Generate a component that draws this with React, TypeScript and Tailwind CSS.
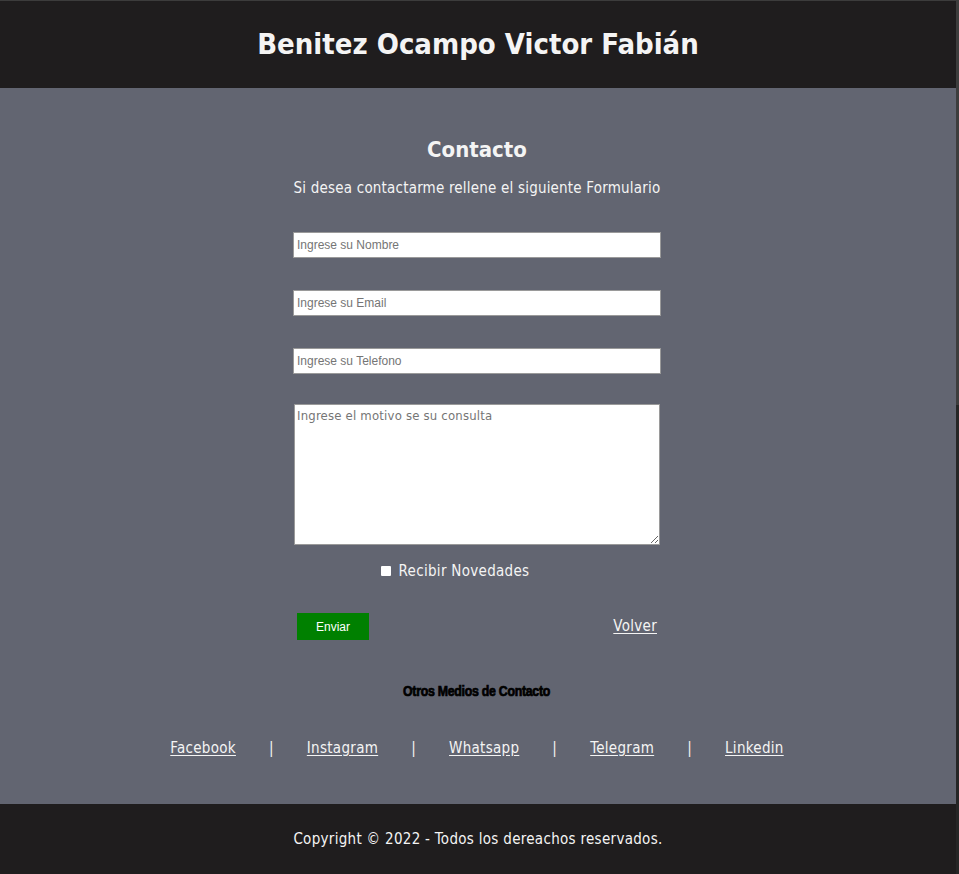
export default function App() {
  const links = ["Facebook", "Instagram", "Whatsapp", "Telegram", "Linkedin"];
  const ff = "font-['DejaVu_Sans_Condensed','DejaVu_Sans',sans-serif]";
  return (
    <div className="flex min-h-[874px] w-full">
      <div className={`flex flex-1 flex-col ${ff} text-[#f4f4f4]`}>
        <header className="flex h-[88px] items-center justify-center border-t border-[#3c3c3c] bg-[#1f1d1e]">
          <h1 className="text-[29px] font-bold">Benitez Ocampo Victor Fabián</h1>
        </header>

        <main className="flex flex-1 flex-col items-center bg-[#626571] pt-[46px] pr-[2px]">
          <h2 className="text-[22px] leading-8 font-bold">Contacto</h2>
          <p className="mt-[10px] text-[15px] leading-6 tracking-[0.2px]">Si desea contactarme rellene el siguiente Formulario</p>

          <form className="mt-[32px] flex w-[368px] flex-col">
            <input
              type="text"
              placeholder="Ingrese su Nombre"
              className="h-[26px] border border-[#9a9a9a] bg-white px-[3px] font-['Liberation_Sans',Arial,sans-serif] text-[12px] text-black placeholder:text-[#757575]"
            />
            <input
              type="email"
              placeholder="Ingrese su Email"
              className="mt-[32px] h-[26px] border border-[#9a9a9a] bg-white px-[3px] font-['Liberation_Sans',Arial,sans-serif] text-[12px] text-black placeholder:text-[#757575]"
            />
            <input
              type="tel"
              placeholder="Ingrese su Telefono"
              className="mt-[32px] h-[26px] border border-[#9a9a9a] bg-white px-[3px] font-['Liberation_Sans',Arial,sans-serif] text-[12px] text-black placeholder:text-[#757575]"
            />
            <textarea
              placeholder="Ingrese el motivo se su consulta"
              className="mx-[1px] mt-[30px] h-[141px] resize border border-[#9a9a9a] bg-white px-[2px] py-[1px] text-[13px] tracking-[0.2px] text-black placeholder:text-[#757575]"
            />

            <label className="mt-[16px] flex items-center justify-center gap-[8px] pr-[44px] text-[15px] leading-5 tracking-[0.3px]">
              <input type="checkbox" className="h-[10px] w-[10px] appearance-none rounded-[1px] bg-white" />
              Recibir Novedades
            </label>

            <div className="mt-[32px] flex items-center justify-between pl-[4px] pr-[4px]">
              <button
                type="button"
                className="h-[27px] w-[72px] bg-[#008000] font-['Liberation_Sans',Arial,sans-serif] text-[12px] text-white"
              >
                Enviar
              </button>
              <a href="#" className="text-[15px] tracking-[0.3px] underline underline-offset-2">
                Volver
              </a>
            </div>
          </form>

          <h3 className="mt-[41px] scale-x-88 font-['Liberation_Sans',Arial,sans-serif] text-[14px] font-bold tracking-[-0.3px] text-black [-webkit-text-stroke:0.7px_black]">
            Otros Medios de Contacto
          </h3>

          <nav className="mt-[35px] flex items-center gap-[33px] text-[15px] tracking-[0.3px]">
            {links.map((l, i) => (
              <div key={l} className="flex items-center gap-[33px]">
                {i > 0 && <span>|</span>}
                <a href="#" className="underline underline-offset-2">
                  {l}
                </a>
              </div>
            ))}
          </nav>
          <div className="h-[44px]" />
        </main>

        <footer className="flex h-[70px] items-center justify-center bg-[#1f1d1e] text-[15px] tracking-[0.3px]">
          Copyright © 2022 - Todos los dereachos reservados.
        </footer>
      </div>
      <div className="flex w-[3px] flex-col">
        <div className="h-[405px] bg-[#3d3d3d]" />
        <div className="flex-1 bg-[#262626]" />
      </div>
    </div>
  );
}
